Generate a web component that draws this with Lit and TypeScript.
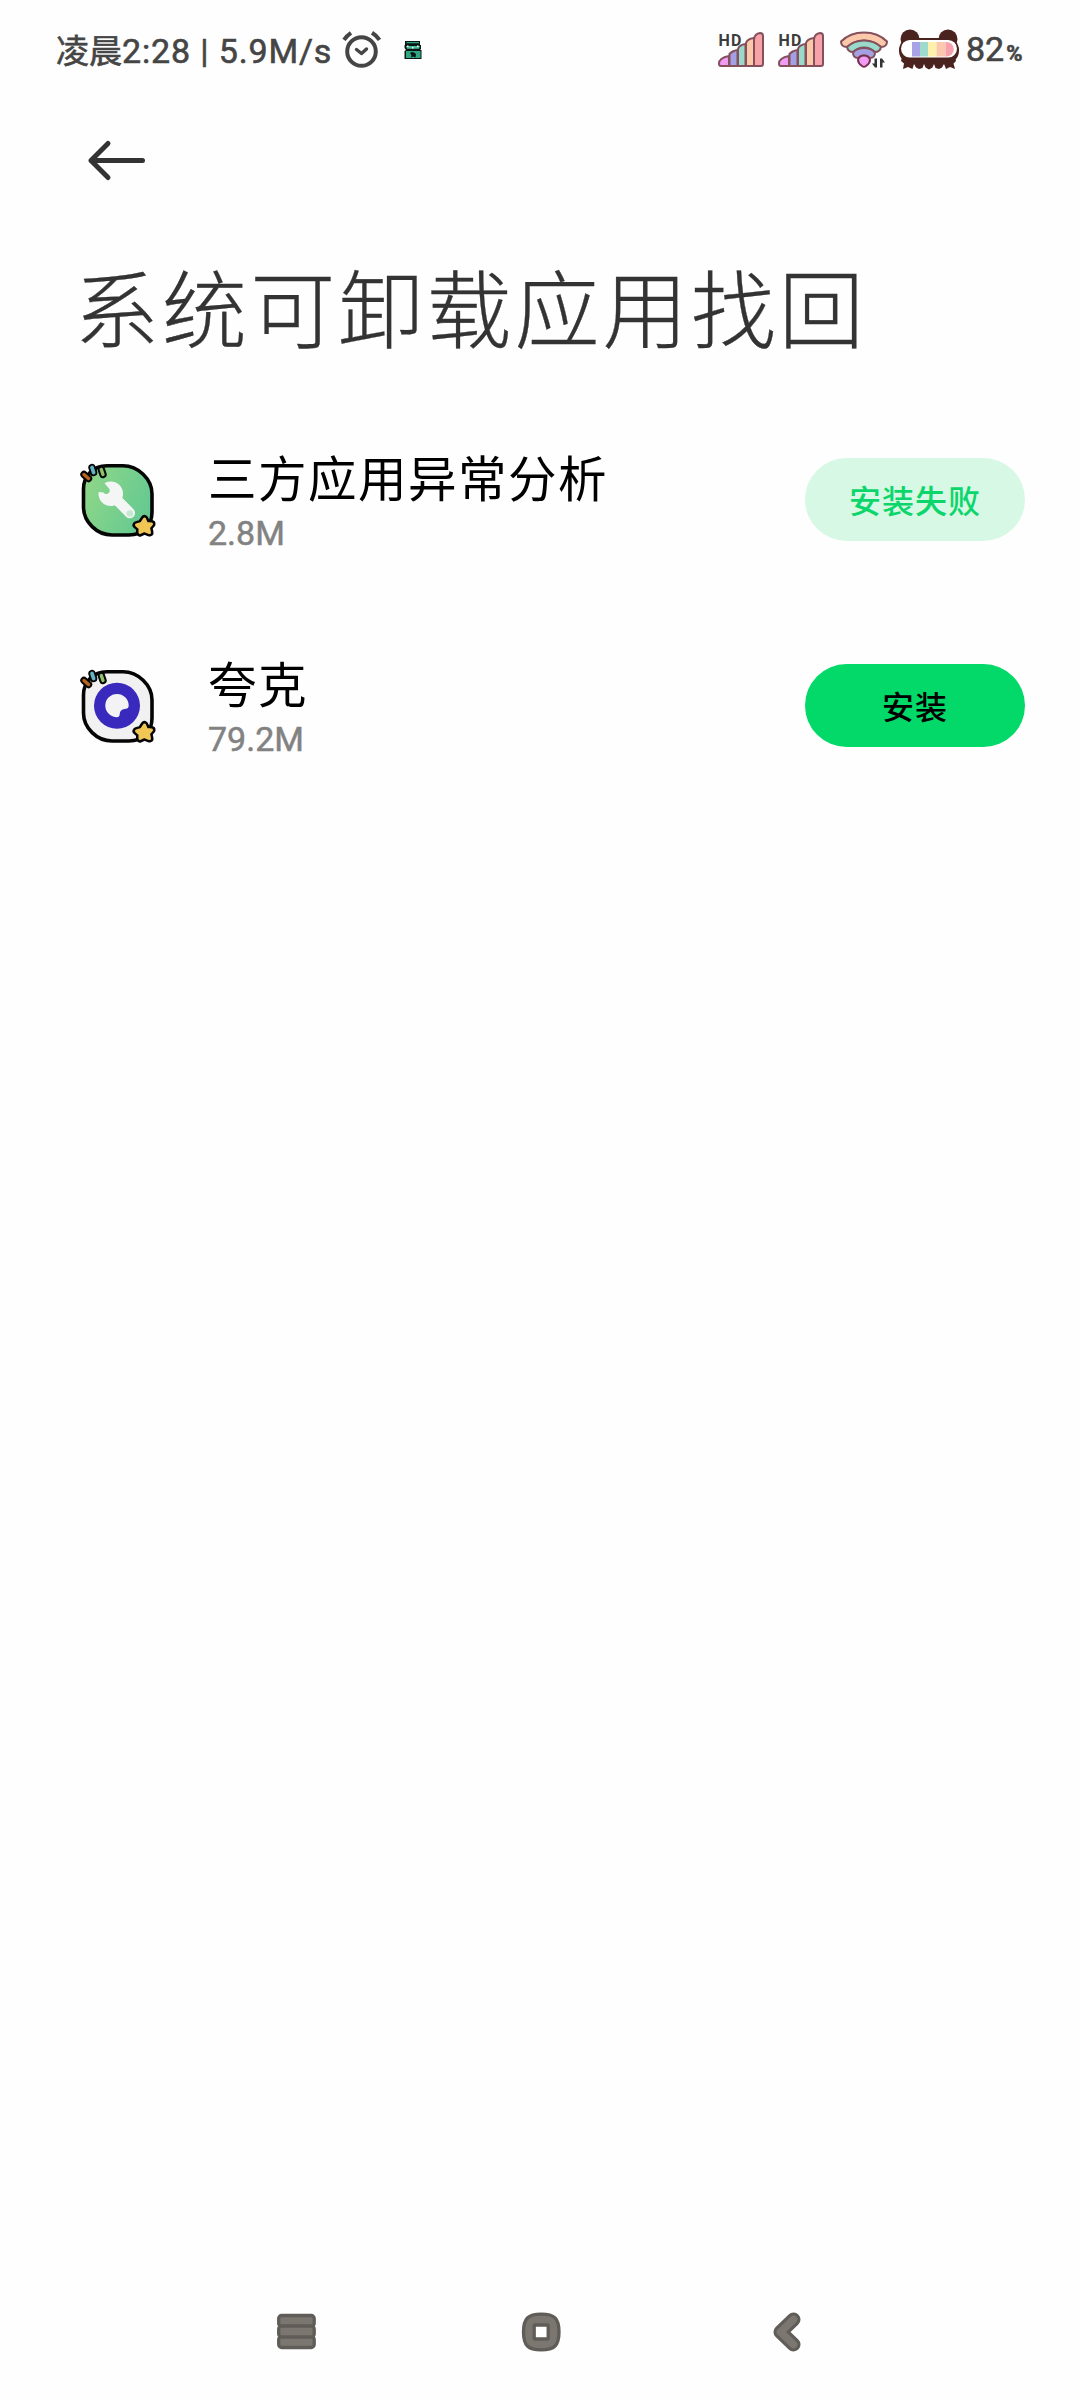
import { LitElement, html, css, svg, nothing } from 'lit';
import { customElement, property } from 'lit/decorators.js';

type InstallState = 'failed' | 'ready';

interface AppItem {
  name: string;
  size: string;
  icon: 'tools' | 'quark';
  state: InstallState;
}

const APPS: AppItem[] = [
  { name: '三方应用异常分析', size: '2.8M', icon: 'tools', state: 'failed' },
  { name: '夸克', size: '79.2M', icon: 'quark', state: 'ready' },
];

/** Status bar with clock, network speed and the themed system icons */
@customElement('status-bar')
export class StatusBar extends LitElement {
  static styles = css`
    :host {
      display: flex;
      align-items: center;
      justify-content: space-between;
      height: 100px;
      padding: 0 55px 0 56px;
      box-sizing: border-box;
      color: #454545;
      font-family: Roboto, 'Noto Sans CJK SC', sans-serif;
      font-weight: 500;
      white-space: nowrap;
    }

    .side {
      display: flex;
      align-items: center;
      height: 98px;
    }

    .clock {
      width: 284px;
      padding-top: 2px;
      font-size: 34px;
      line-height: 40px;
      font-weight: 400;
      -webkit-text-stroke: 0.6px #454545;
    }

    .period {
      font-size: 33px;
    }

    .figures {
      letter-spacing: 0.85px;
    }

    .droid {
      margin-left: 20px;
    }

    .signal {
      margin-right: 12px;
    }

    .wifi {
      margin: 0 9px 0 2px;
    }

    .battery {
      margin-right: 6px;
    }

    .percent {
      display: flex;
      align-items: baseline;
      width: 59px;
      padding-top: 2px;
      font-size: 34px;
      line-height: 40px;
      font-weight: 400;
      -webkit-text-stroke: 0.6px #454545;
    }

    .unit {
      margin-left: 2px;
      font-size: 22px;
      font-weight: 700;
    }

    .hd {
      font: 700 16px Roboto, sans-serif;
      fill: #3c3c3c;
    }
  `;

  signal() {
    return html`
      <svg class="signal" width="48" height="40" viewBox="0 0 48 40">
        <text class="hd" x="1.5" y="15.5" textLength="23">HD</text>
        <g stroke="#84505c" stroke-width="2" stroke-linejoin="round">
          <path d="M2 33.5 Q2 28 12 26 V36 H4 Q2 36 2 33.5Z" fill="#f09cf4" />
          <path d="M12.500 36 V24 Q15 21 20.500 20 V36Z" fill="#a3a0e4" />
          <path d="M21 36 V19 Q22 15 28.500 14 V36Z" fill="#9adaca" />
          <path d="M29 36 V13 Q30 9 37 8 V36Z" fill="#fbc9a9" />
          <path d="M37 36 V9 Q38 3.500 43 3 Q46 3 46 6 V34 Q46 36 44 36Z" fill="#f7a1a8" />
        </g>
      </svg>
    `;
  }

  render() {
    return html`
      <div class="side">
        <span class="clock"><span class="period">凌晨</span><span class="figures">2:28 | 5.9M/s</span></span>
        <svg width="44" height="40" viewBox="0 0 44 40" fill="none" stroke="#454545" stroke-linecap="round">
          <circle cx="21.500" cy="21.500" r="14.300" stroke-width="4" />
          <path d="M4 9.800 Q7 5.500 11 2.800 M32 2.800 Q36.500 5.500 39.500 9.800" stroke-width="4" stroke-linecap="butt" />
          <path d="M16.500 19.500 L21.500 23.500 L26.500 19" stroke-width="3.400" stroke-linejoin="round" />
        </svg>
        <svg class="droid" width="18" height="20" viewBox="0 0 18 20">
          <path d="M1 1 H16 V5 H17 V9 L16 10 H17.500 V19 H0.500 V11 L2 10 L0.500 8 V5 H1Z" fill="#0b1613" />
          <path d="M2.500 2 H15 V3.300 H2.500Z M2 11 H16.500 V18 H2Z" fill="#2fa583" />
          <path d="M2 6 H16 L15 8.700 H3Z" fill="#4bbd9c" />
          <path d="M6 13 L8 12 L10 12.500 L12 14 L11.500 17.500 L9 16.500 L7 17.500 L7.500 15Z" fill="#0b1613" />
          <path d="M3 5.500 h1.500 v1.500 h-1.500z M8 7 h1.500 v1.500 h-1.500z M13 5.500 h1.500 v1.500 h-1.500z" fill="#e9fff8" />
        </svg>
      </div>
      <div class="side">
        ${this.signal()} ${this.signal()}
        <svg class="wifi" width="50" height="40" viewBox="0 0 50 40">
          <g stroke="#84505c" stroke-width="2" stroke-linejoin="round">
            <path d="M2 11.500 Q11 2.500 25 2.500 Q39 2.500 48 11.500 Q48 17 42 17 Q35 10.500 25 10.500 Q15 10.500 8 17 Q2 17 2 11.500Z" fill="#fbc9a9" />
            <path d="M8 17 Q15 10.500 25 10.500 Q35 10.500 42 17 Q41 22 36 22 Q31 17.500 25 17.500 Q19 17.500 14 22 Q9 22 8 17Z" fill="#9adaca" />
            <path d="M14 22.500 Q18 18 25 18 Q32 18 36 22.500 Q36 28 31 28 Q28 25.500 25 25.500 Q22 25.500 19 28 Q14 28 14 22.500Z" fill="#a3a0e4" />
            <path d="M19 30 Q20 25.500 25 25.500 Q30 25.500 31 30 Q31 33 27 36 Q25 37.500 23 36 Q19 33 19 30Z" fill="#f09cf4" stroke="#7a3150" />
          </g>
          <path d="M38 28.500 V37.500 H36 L33 33.500 H35.500 V28.500Z M41 37.500 V28.500 H43 L46 32.500 H43.500 V37.500Z" fill="#333" />
        </svg>
        <svg class="battery" width="62" height="44" viewBox="0 0 62 44">
          <g fill="#4a231f">
            <circle cx="12" cy="11" r="9.500" />
            <circle cx="50" cy="11" r="9.500" />
            <rect x="1" y="10" width="60" height="25" rx="12" />
            <path
              d="M4 29 H57 L58 33 L55.500 35.500 L57 41 L52 39 L48 41 L46 36 L44 39.500 L41 41 L37.500 40 L36 36 L34.500 39.500 L31 41.500 L27.500 39.500 L26 36 L24.500 40 L21 41 L18 39.500 L16 36 L14.500 41 L10 39 L5 41 L6 35.500 L3 33Z"
            />
          </g>
          <rect x="3" y="12" width="56" height="17.500" rx="8.700" fill="#fff" />
          <path d="M14 14 h8 v14.500 h-8z" fill="#a8a3e6" />
          <path d="M22 14 h8 v14.500 h-8z" fill="#9edbcd" />
          <path d="M30 14 h8.500 v14.500 h-8.500z" fill="#fff0ac" />
          <path d="M38.500 14 h9 v14.500 h-9z" fill="#fbc8ad" />
          <path d="M47.500 14 h1 a7.200 7.200 0 0 1 0 14.500 h-1z" fill="#f7a1ac" />
        </svg>
        <span class="percent">82<span class="unit">%</span></span>
      </div>
    `;
  }
}

/** Launcher icon: black outlined tile with sprinkles and a star */
@customElement('app-icon')
export class AppIcon extends LitElement {
  static styles = css`
    :host {
      display: block;
      width: 78px;
      height: 78px;
      padding-top: 2px;
    }

    svg {
      display: block;
    }
  `;

  @property() name: AppItem['icon'] = 'tools';

  glyph() {
    if (this.name === 'quark') {
      return svg`
        <circle cx="38" cy="38.700" r="23" fill="#3929bd" />
        <path d="M38 26.900 A11.700 11.700 0 0 1 49.700 38.500 Q49.700 41.500 47 41.700 Q41 42 40.700 47 Q40.500 50.300 38 50.300 A11.700 11.700 0 0 1 38 26.900Z" fill="#f3f3f5" />
      `;
    }
    return svg`
      <path d="M38 39 L50.800 52" stroke="#e3f1e7" stroke-width="10.500" stroke-linecap="round" />
      <path d="M25.500 22.200 A12.300 12.300 0 1 1 19.600 31 L24.500 31.500 A3 3 0 0 0 30 27.500 Z" fill="#f3f6f5" />
      <path d="M41 42 L50.800 52" stroke="#f3f6f5" stroke-width="10" stroke-linecap="round" />
      <circle cx="50.800" cy="52.500" r="3.300" fill="#c3e9d0" />
    `;
  }

  render() {
    const fill = this.name === 'tools' ? 'url(#tile)' : '#f1f1f2';
    return html`
      <svg width="78" height="78" viewBox="0 0 78 78" fill="none">
        <defs>
          <linearGradient id="tile" x1="0" y1="0.300" x2="1" y2="0.700">
            <stop offset="0" stop-color="#8ed688" />
            <stop offset="1" stop-color="#62c992" />
          </linearGradient>
        </defs>
        <path
          d="M28 4.800 H44 C59 4.800 73 18 73 33 V51 C73 65 64 74 50 74 H33 C18 74 4.500 61 4.500 46 V28 C4.500 15 14 4.800 28 4.800Z"
          fill=${fill}
          stroke="#050505"
          stroke-width="3.600"
        />
        ${this.glyph()}
        <g stroke-linecap="round">
          <path d="M5 13.500 L9.500 17.500 M13 6.500 L14.600 11.500 M22.300 8.500 L24 13.500" stroke="#050505" stroke-width="7.400" />
          <path d="M5 13.500 L9.500 17.500" stroke="#b5651d" stroke-width="3.400" />
          <path d="M13 6.500 L14.600 11.500" stroke="#62b3c4" stroke-width="3.800" />
          <path d="M22.300 8.500 L24 13.500" stroke="#8cc36c" stroke-width="3.400" />
        </g>
        <g stroke-linejoin="round" fill="#f0c655">
          <path
            d="M65.500 58 L67.500 62.500 L72.500 63 L69.500 66.500 L70.500 71.500 L65.500 69.500 L61 71.500 L61 67 L57.500 64 L62.500 62.500Z"
            stroke="#050505"
            stroke-width="8"
          />
          <path
            d="M65.500 58 L67.500 62.500 L72.500 63 L69.500 66.500 L70.500 71.500 L65.500 69.500 L61 71.500 L61 67 L57.500 64 L62.500 62.500Z"
            stroke="#f0c655"
            stroke-width="3"
          />
        </g>
      </svg>
    `;
  }
}

/** One recoverable app with its install button */
@customElement('app-row')
export class AppRow extends LitElement {
  static styles = css`
    :host {
      display: flex;
      align-items: center;
      height: 206px;
      padding: 0 55px 0 79px;
      box-sizing: border-box;
      font-family: Roboto, 'Noto Sans CJK SC', sans-serif;
    }

    .info {
      flex: 1;
      padding: 5px 0 0 51px;
    }

    .name {
      color: #000;
      font-family: 'Noto Sans CJK SC', sans-serif;
      font-size: 48.5px;
      letter-spacing: 1.5px;
      line-height: 56px;
    }

    .size {
      padding-top: 6px;
      color: #828282;
      font-size: 34px;
      line-height: 46px;
      -webkit-text-stroke: 0.5px #828282;
    }

    button {
      width: 220px;
      height: 83px;
      padding: 0;
      border: none;
      border-radius: 42px;
      font-family: 'Noto Sans CJK SC', sans-serif;
      font-size: 32px;
      font-weight: 500;
      letter-spacing: 1px;
    }

    .ready {
      background: #02d968;
      color: #000;
    }

    .failed {
      background: #d8f8e6;
      color: #0cd66b;
    }
  `;

  @property({ attribute: false }) app?: AppItem;

  render() {
    if (!this.app) return nothing;
    const { name, size, icon, state } = this.app;
    return html`
      <app-icon .name=${icon}></app-icon>
      <div class="info">
        <div class="name">${name}</div>
        <div class="size">${size}</div>
      </div>
      <button class=${state}>${state === 'failed' ? '安装失败' : '安装'}</button>
    `;
  }
}

/** System navigation: recents, home, back */
@customElement('nav-bar')
export class NavBar extends LitElement {
  static styles = css`
    :host {
      display: flex;
      align-items: center;
      height: 136px;
      padding-left: 276px;
    }

    .home {
      margin: 0 211px 0 205px;
    }
  `;

  render() {
    return html`
      <svg width="40" height="40" viewBox="0 0 40 40" fill="#7c7671" stroke="#605c57" stroke-width="3.300">
        <rect x="2.700" y="3.500" width="35.500" height="11" rx="3" />
        <rect x="2.700" y="24.500" width="35.500" height="11" rx="3" />
        <rect x="2.700" y="14" width="35.500" height="11" rx="3" />
      </svg>
      <svg class="home" width="40" height="40" viewBox="0 0 40 40" fill="#7c7671" stroke="#605c57" stroke-width="3.300">
        <path d="M20.200 2.200 C33.500 2.200 38 6.500 38 20 C38 33.500 33.500 37.800 20.200 37.800 C7 37.800 2.500 33.500 2.500 20 C2.500 6.500 7 2.200 20.200 2.200Z" />
        <rect x="13.200" y="13" width="14" height="14" rx="1" fill="#fff" />
      </svg>
      <svg width="30" height="40" viewBox="0 0 30 40" fill="none" stroke-linecap="round" stroke-linejoin="round">
        <path d="M21.500 7.500 L8.500 20 L21.500 32.500" stroke="#605c57" stroke-width="14" />
        <path d="M21.500 7.500 L8.500 20 L21.500 32.500" stroke="#7c7671" stroke-width="7.600" />
      </svg>
    `;
  }
}

@customElement('app-root')
export class AppRoot extends LitElement {
  static styles = css`
    :host {
      display: flex;
      flex-direction: column;
      height: 2400px;
      background: #fefefe;
    }

    .back {
      display: block;
      margin: 36px 0 0 84px;
    }

    h1 {
      margin: 71px 0 0;
      padding-left: 74px;
      height: 141px;
      color: #333;
      font-family: 'Noto Sans CJK SC', sans-serif;
      font-size: 85px;
      font-weight: 300;
      letter-spacing: 3.1px;
      line-height: 100px;
      -webkit-text-stroke: 0.3px #333;
    }

    main {
      flex: 1;
    }
  `;

  render() {
    return html`
      <status-bar></status-bar>
      <svg class="back" width="64" height="48" viewBox="0 0 64 48" fill="none" stroke="#333" stroke-width="5" stroke-linecap="round" stroke-linejoin="round">
        <path d="M24 7.500 L7 24.500 L24 41.500 M7 24.500 H58.500" />
      </svg>
      <h1>系统可卸载应用找回</h1>
      <main>${APPS.map((app) => html`<app-row .app=${app}></app-row>`)}</main>
      <nav-bar></nav-bar>
    `;
  }
}
